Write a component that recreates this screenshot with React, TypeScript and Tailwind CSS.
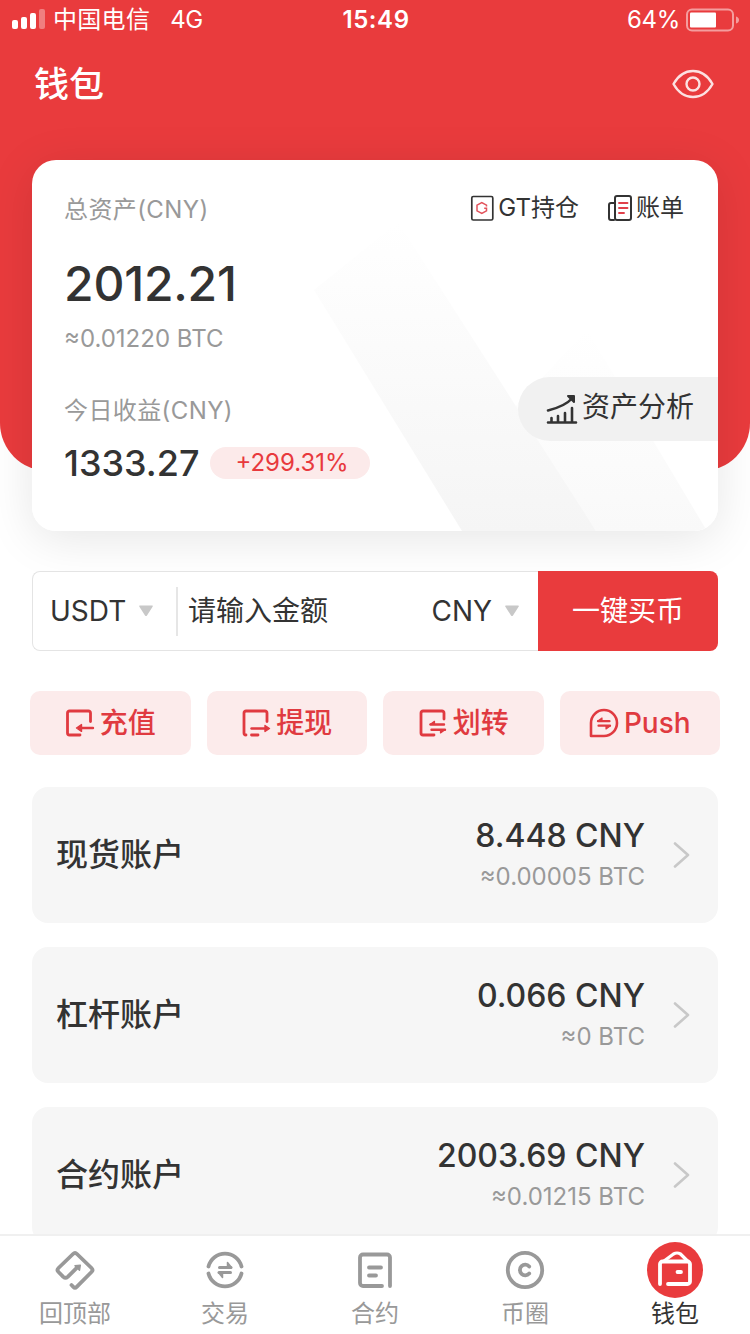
import type { ReactNode } from 'react';

const accounts = [
  { name: '现货账户', amount: '8.448 CNY', btc: '≈0.00005 BTC' },
  { name: '杠杆账户', amount: '0.066 CNY', btc: '≈0 BTC' },
  { name: '合约账户', amount: '2003.69 CNY', btc: '≈0.01215 BTC' },
];

function ActionIcon({ children }: { children: ReactNode }) {
  return (
    <svg
      className="w-[30px] h-[30px] shrink-0"
      viewBox="0 0 30 30"
      fill="none"
      stroke="currentColor"
      strokeWidth="2.8"
      strokeLinecap="round"
      strokeLinejoin="round"
    >
      {children}
    </svg>
  );
}

const actions = [
  {
    name: '充值',
    icon: (
      <ActionIcon>
        <path d="M25.5 13.5V5a2 2 0 0 0-2-2h-19a2 2 0 0 0-2 2v20a2 2 0 0 0 2 2H15" />
        <path d="M28 20H15" strokeWidth="2.4" />
        <path d="M11.5 20l5-3.4v6.8z" fill="currentColor" strokeWidth="1.4" />
      </ActionIcon>
    ),
  },
  {
    name: '提现',
    icon: (
      <ActionIcon>
        <path d="M26 13.5V5a2 2 0 0 0-2-2H5a2 2 0 0 0-2 2v20a2 2 0 0 0 2 2M10.500 27H17" />
        <path d="M10.500 20.500H24" strokeWidth="2.4" />
        <path d="M28.500 20.500l-4.500-3v6z" fill="currentColor" strokeWidth="1.4" />
      </ActionIcon>
    ),
  },
  {
    name: '划转',
    icon: (
      <ActionIcon>
        <path d="M26 11V5a2 2 0 0 0-2-2H5a2 2 0 0 0-2 2v20a2 2 0 0 0 2 2h11" />
        <path d="M12.500 16.500H26M13.500 21.700H27" strokeWidth="2.4" />
        <path d="M12 16.500l4.500-3.200v3.200zM27 21.700l-4.500 3.200v-3.200z" fill="currentColor" strokeWidth="1.2" />
      </ActionIcon>
    ),
  },
  {
    name: 'Push',
    icon: (
      <ActionIcon>
        <path d="M2 28V15A13 13 0 1 1 15 28z" strokeWidth="2.600" />
        <path d="M9 13.200H20.500M9.500 17.700H21" strokeWidth="2.200" />
        <path d="M8.500 13.200l4.500-3.200v3.200zM21.500 17.700l-4.500 3.200v-3.200z" fill="currentColor" strokeWidth="1.200" />
      </ActionIcon>
    ),
  },
];

function TabIcon({ children }: { children: ReactNode }) {
  return (
    <svg
      className="w-14 h-14"
      viewBox="0 0 56 56"
      fill="none"
      stroke="currentColor"
      strokeWidth="3.800"
      strokeLinecap="round"
      strokeLinejoin="round"
    >
      {children}
    </svg>
  );
}

const tabs = [
  {
    name: '回顶部',
    icon: (
      <TabIcon>
        <path d="M24.500 43l1.800 1.800q1.700 1.700 3.400 0L44.500 30q2-2 0-4L30 12q-2-2-4 0L11.500 26q-2 2 0 4l4.800 4.800q2.200 2 4.400 0L30 25.700" />
        <path d="M33.300 23.200l-.8 5-4.500-4.400z" fill="currentColor" strokeWidth="1.500" />
      </TabIcon>
    ),
  },
  {
    name: '交易',
    icon: (
      <TabIcon>
        <path d="M11.500 24.500a17 17 0 0 1 33 0M11.500 31.500a17 17 0 0 0 33 0" />
        <path d="M22.500 25.500H34M22 30.500H33.500" strokeWidth="3" />
        <path d="M30.500 20.500l4 5h-4zM25.500 35.500l-4-5h4z" fill="currentColor" strokeWidth="1.500" />
      </TabIcon>
    ),
  },
  {
    name: '合约',
    icon: (
      <TabIcon>
        <path d="M43 44V15.500a3 3 0 0 0-3-3H16a3 3 0 0 0-3 3V41a3 3 0 0 0 3 3H35" />
        <path d="M22 25.500H34M22 33.500H29" />
      </TabIcon>
    ),
  },
  {
    name: '币圈',
    icon: (
      <TabIcon>
        <circle cx="28" cy="28" r="17.200" />
        <path d="M32.200 24.500a5.300 5.300 0 1 0 0 7" />
      </TabIcon>
    ),
  },
];

function Caret() {
  return (
    <svg className="w-4 h-3 shrink-0" viewBox="0 0 16 12" fill="#c8c8c8">
      <path d="M2 .5h12q1.500 0 .6 1.300L9 10.500q-1 1.200-2 0L1.400 1.800Q.5.500 2 .5z" />
    </svg>
  );
}

function StatusBar() {
  return (
    <div className="flex h-10 items-center text-white text-2xl">
      <div className="flex flex-1 items-center pl-3">
        <svg className="w-[34px] h-[22px] mr-[7px]" viewBox="0 0 34 22" fill="currentColor">
          <rect x="0" y="11" width="6" height="9" rx="2" />
          <rect x="9" y="8" width="6" height="12" rx="2" />
          <rect x="18" y="4" width="6" height="16" rx="2" />
          <rect x="27" y="0" width="6" height="20" rx="2" opacity=".35" />
        </svg>
        <span className="tracking-[0.3px]">中国电信</span>
        <span className="ml-5 tracking-[-0.5px]">4G</span>
      </div>
      <span className="font-semibold tracking-[0.6px]">15:49</span>
      <div className="flex flex-1 items-center justify-end pr-[10px]">
        <span className="mr-[6px] tracking-[-0.3px]">64%</span>
        <svg className="w-[54px] h-6" viewBox="0 0 54 24">
          <rect x="1" y="1.500" width="46" height="21" rx="5" fill="none" stroke="#fff" strokeOpacity=".5" strokeWidth="2" />
          <rect x="4" y="4.500" width="26" height="15" rx="1" fill="#fff" />
          <path d="M50 8.500q3 1 3 3.500t-3 3.500z" fill="#fff" opacity=".5" />
        </svg>
      </div>
    </div>
  );
}

function AssetCard() {
  return (
    <div className="relative mx-8 h-[371px] rounded-3xl bg-white overflow-hidden">
      {/* Diagonal light bands behind the figures */}
      <svg className="absolute inset-0 w-full h-full" viewBox="0 0 686 371">
        <defs>
          <linearGradient id="band" x1="0" y1="0" x2="0" y2="1">
            <stop offset="0" stopColor="#fff" />
            <stop offset="1" stopColor="#f5f5f5" />
          </linearGradient>
          <linearGradient id="bandSoft" x1="0" y1="0" x2="0" y2="1">
            <stop offset="0" stopColor="#fff" />
            <stop offset="1" stopColor="#f9f9f9" />
          </linearGradient>
        </defs>
        <path d="M480 250L555 170L675 371H564z" fill="url(#bandSoft)" />
        <path d="M282 130L366 62L564 371H430z" fill="url(#band)" />
      </svg>

      <div className="relative flex justify-between pl-8">
        <div className="flex flex-col pt-[34px] text-[#999]">
          <div className="h-8 leading-8 text-2xl tracking-[0.4px]">总资产(CNY)</div>
          <div className="mt-7 h-[60px] leading-[60px] text-[48px] font-medium tracking-[-0.2px] text-[#333]">2012.21</div>
          <div className="mt-[9px] h-8 leading-8 text-2xl">≈0.01220 BTC</div>
          <div className="mt-10 h-8 leading-8 text-2xl tracking-[0.4px]">今日收益(CNY)</div>
          <div className="mt-4 flex h-[40px] items-center">
            <span className="text-[36px] font-medium text-[#333]">1333.27</span>
            <span className="ml-[10px] h-8 w-40 rounded-full bg-[#fceaea] pl-[5px] text-center leading-8 text-2xl text-[#e8393d]">
              +299.31%
            </span>
          </div>
        </div>

        <div className="flex flex-col items-end pt-8">
          <div className="flex h-8 items-center pr-[34px] text-2xl text-[#333]">
            <svg className="w-6 h-[26px] mr-1" viewBox="0 0 24 26" fill="none">
              <rect x="1.800" y="1.500" width="21" height="23.500" rx="1.500" stroke="#333" strokeWidth="1.700" />
              <path d="M16.500 11.500v-1.300L11.800 7.500 7 10.200v5.600l4.800 2.700 4.700-2.700v-2.500h-2.300" stroke="#e2525b" strokeWidth="1.500" />
            </svg>
            <span>GT持仓</span>
            <svg className="w-[26px] h-[28px] ml-[28px] mr-[3px]" viewBox="0 0 26 28" fill="none" strokeLinecap="round">
              <path d="M8 9H4a2 2 0 0 0-2 2v13a2 2 0 0 0 2 2h3" stroke="#333" strokeWidth="2" />
              <rect x="8" y="2" width="16" height="24" rx="2" stroke="#333" strokeWidth="2" />
              <path d="M12 9h8.500M12 14h8.500M12 19h5" stroke="#e0404a" strokeWidth="1.900" />
            </svg>
            <span>账单</span>
          </div>
          <button className="mt-[153px] flex h-16 w-[200px] items-center rounded-l-full bg-[#f1f1f1] pl-7 text-[#333]">
            <svg
              className="w-8 h-8 mr-1"
              viewBox="0 0 32 32"
              fill="none"
              stroke="currentColor"
              strokeWidth="2.600"
              strokeLinecap="round"
            >
              <path d="M2 29.500H30M5.500 29v-4M12 29v-6M19 29v-9M26 29V15" />
              <path d="M2 17.500C12 15 21 11 26 5.500" />
              <path d="M22 3h6v6z" fill="currentColor" strokeLinejoin="round" strokeWidth="2" />
            </svg>
            <span className="-mt-[5px] text-[28px] leading-none">资产分析</span>
          </button>
        </div>
      </div>
    </div>
  );
}

export default function App() {
  return (
    <div className="flex h-[1334px] w-[750px] flex-col overflow-hidden bg-white font-['Inter','Noto_Sans_CJK_SC',sans-serif] text-[#333]">
      {/* Red header, the card hangs over its bottom edge */}
      <header className="h-[471px] shrink-0 rounded-b-[48px] bg-[#e93b3d]">
        <StatusBar />
        <div className="flex h-[88px] items-center justify-between pl-[34px] pr-9 text-white">
          <h1 className="text-[35px] leading-none font-medium">钱包</h1>
          <svg className="w-[42px] h-[30px]" viewBox="0 0 42 30" fill="none" stroke="#fff" strokeOpacity=".85" strokeWidth="2.400">
            <path d="M1.500 15C6 7 13 2 21 2s15 5 19.500 13C36 23 29 28 21 28S6 23 1.500 15z" strokeLinejoin="round" />
            <circle cx="21" cy="15" r="6.500" />
          </svg>
        </div>
        <div className="pt-8">
          <div className="rounded-3xl">
            <div className="mx-8 rounded-3xl shadow-[0_8px_48px_rgba(0,0,0,0.1)]">
              <div className="-mx-8">
                <AssetCard />
              </div>
            </div>
          </div>
        </div>
      </header>

      {/* Quick buy */}
      <div className="mx-8 mt-[100px] flex h-20 shrink-0">
        <div className="flex flex-1 items-center rounded-l-lg border border-r-0 border-[#e4e4e4] bg-white text-[28px]">
          <span className="w-[76px] pl-[17px]">USDT</span>
          <span className="ml-[29px] flex">
            <Caret />
          </span>
          <span className="ml-[22px] h-[49px] w-[2px] bg-[#e6e6e6]" />
          <span className="ml-[10px] flex-1">请输入金额</span>
          <span>CNY</span>
          <span className="ml-3 mr-[18px] flex">
            <Caret />
          </span>
        </div>
        <button className="w-[180px] rounded-r-lg bg-[#e93b3d] text-[28px] text-white">一键买币</button>
      </div>

      <div className="mx-[30px] mt-10 grid shrink-0 grid-cols-4 gap-4">
        {actions.map((action) => (
          <button
            key={action.name}
            className="flex h-16 items-center justify-center gap-[5px] rounded-[10px] bg-[#fcebeb] text-[28px] font-medium text-[#e03a40]"
          >
            {action.icon}
            <span>{action.name}</span>
          </button>
        ))}
      </div>

      {/* Accounts, the last one runs under the tab bar */}
      <div className="mx-8 mt-8 flex min-h-0 flex-1 flex-col gap-6 overflow-hidden">
        {accounts.map((account) => (
          <div key={account.name} className="flex h-[136px] shrink-0 items-center rounded-2xl bg-[#f6f6f6] pl-6 pr-7">
            <span className="flex-1 text-[32px] font-medium">{account.name}</span>
            <div className="text-right">
              <div className="h-11 leading-[44px] text-[32px] font-medium">{account.amount}</div>
              <div className="h-[38px] leading-[38px] text-2xl text-[#999]">{account.btc}</div>
            </div>
            <svg
              className="ml-7 w-[17px] h-[26px]"
              viewBox="0 0 17 26"
              fill="none"
              stroke="#c8c8c8"
              strokeWidth="2.600"
              strokeLinecap="round"
              strokeLinejoin="round"
            >
              <path d="M2 1.500L15 13L2 24.500" />
            </svg>
          </div>
        ))}
      </div>

      <nav className="grid h-[100px] shrink-0 grid-cols-5 border-t-2 border-[#f0f0f0] bg-white text-2xl">
        {tabs.map((tab) => (
          <div key={tab.name} className="flex flex-col items-center pt-[6px] text-[#999]">
            {tab.icon}
            <span className="leading-8">{tab.name}</span>
          </div>
        ))}
        <div className="flex flex-col items-center pt-[6px]">
          <div className="h-14 w-14 rounded-full bg-[#e93b3d] text-white">
            <TabIcon>
              <path d="M13 42V22a2.500 2.500 0 0 1 2.500-2.500h25A2.500 2.500 0 0 1 43 22v17.500a2.500 2.500 0 0 1-2.500 2.500H21" />
              <path d="M17 19l9.500-7q3.500-2 7 0l7 7" strokeWidth="3.200" />
              <path d="M30.500 30H34" />
            </TabIcon>
          </div>
          <span className="leading-8">钱包</span>
        </div>
      </nav>
    </div>
  );
}
